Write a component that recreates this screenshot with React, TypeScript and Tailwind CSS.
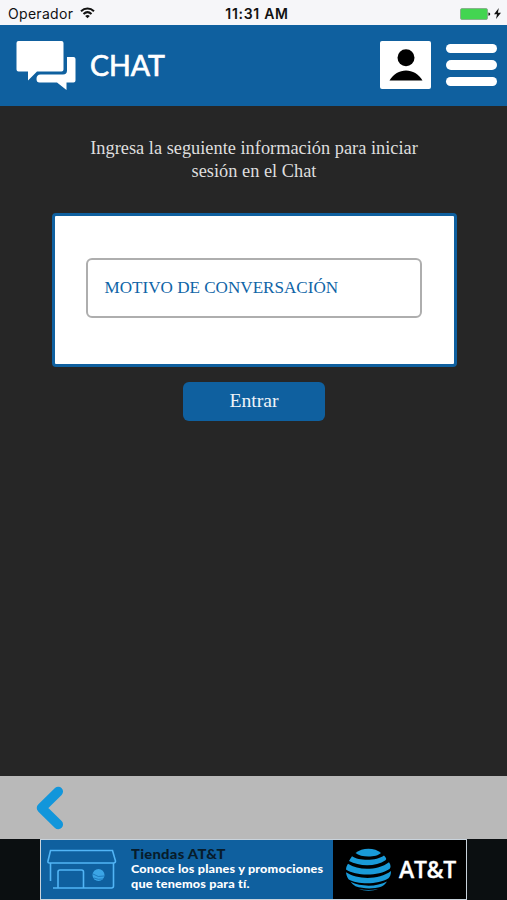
import React from "react";

function StatusBar() {
  return (
    <div className="flex h-[25px] shrink-0 items-center bg-[#f6f6f9] text-[#111] font-['Inter','Liberation_Sans',sans-serif]">
      <div className="flex flex-1 items-center gap-[7px] pl-[8px] pt-[3px]">
        <span className="text-[14px] leading-4 tracking-[0.3px]">Operador</span>
        <svg className="mb-[2px] h-[12px] w-[15px]" viewBox="0 0 15 12" fill="none" stroke="#111" strokeWidth="2">
          <path d="M1 4.3C4.8.6 10.2.6 14 4.3" />
          <path d="M3.5 7C6 4.7 9 4.7 11.5 7" />
          <path d="M7.5 11.3 5.2 8.9C6.6 7.7 8.4 7.7 9.8 8.9Z" fill="#111" stroke="none" />
        </svg>
      </div>
      <span className="ml-[5px] pt-[3px] text-[14px] leading-4 font-semibold tracking-[0.7px]">11:31 AM</span>
      <div className="flex flex-1 items-center justify-end gap-[3px] pr-[6px] pt-[2px]">
        <svg className="h-[12px] w-[31px]" viewBox="0 0 31 12">
          <rect x="0.5" y="0.5" width="27" height="11" rx="1.5" fill="#43d551" stroke="#83a487" strokeWidth="0.8" />
          <path d="M28.4 4.5C30.8 4.8 30.8 7.5 28.4 7.8Z" fill="#222" />
        </svg>
        <svg className="h-[11px] w-[7px]" viewBox="0 0 7 11">
          <path d="M4.8 0 0 6.2H3L2 11 7 4.7H3.9Z" fill="#111" />
        </svg>
      </div>
    </div>
  );
}

function Header() {
  return (
    <header className="flex h-[81px] shrink-0 items-start bg-[#0f609f] pt-[15px] pr-[10px] pl-[16px]">
      <svg className="h-[51px] w-[60px]" viewBox="0 0 60 51" fill="#fff">
        <path d="M2.5 1H45.5Q47.5 1 47.5 3V29.5Q47.5 31.5 45.5 31.5H21L12 40.5V31.5H2.5Q.5 31.5 .5 29.5V3Q.5 1 2.5 1Z" />
        <path d="M51 17H57.5Q59.5 17 59.5 19V40.5Q59.5 42.5 57.5 42.5H50.5V50L41 42.5H23.5Q20.5 42.5 20.5 39Q20.5 34.5 24.5 34.5H47Q51 34.5 51 30.5V17Z" />
      </svg>
      <h1 className="mt-[7px] ml-[14px] flex-1 font-['Lato',sans-serif] text-[28.5px] leading-9 font-normal text-white [-webkit-text-stroke:0.7px_white]">
        CHAT
      </h1>
      <div className="mt-[1px] flex h-[48px] w-[51px] justify-center rounded-[2px] bg-white">
        <svg className="mt-[8px] h-[33px] w-[34px]" viewBox="0 0 34 33">
          <circle cx="17" cy="8.8" r="8.5" />
          <path d="M.5 31.5C8 18 26 18 33.5 31.5Z" />
        </svg>
      </div>
      <div className="mt-[4px] ml-[15px] flex w-[51px] flex-col gap-[7px]">
        <span className="h-[9px] rounded-full bg-white" />
        <span className="h-[10px] rounded-full bg-white" />
        <span className="h-[9px] rounded-full bg-white" />
      </div>
    </header>
  );
}

function LoginPanel() {
  return (
    <main className="flex flex-1 flex-col items-center bg-[#262626] pl-px font-['Liberation_Serif',serif]">
      <p className="mt-[31px] text-center text-[18.35px] leading-[23px] text-[#dedede]">
        Ingresa la seguiente información para iniciar
        <br />
        sesión en el Chat
      </p>
      <div className="mt-[30px] h-[154px] w-[405px] rounded-[4px] border-[3px] border-[#0f609f] bg-white px-[31px] pt-[42px]">
        <div className="flex h-[60px] w-[336px] items-center rounded-[6px] border-2 border-[#aeaeae] pb-px pl-[17px] text-[17.1px] text-[#0f65a7]">
          <span>MOTIVO DE CONVERSACIÓN</span>
        </div>
      </div>
      <button className="mt-[15px] h-[39px] w-[142px] rounded-[6px] bg-[#0f609f] pb-px text-[19.7px] text-[#edf3f8]">Entrar</button>
    </main>
  );
}

function Ad() {
  return (
    <div className="flex h-[61px] shrink-0 justify-center bg-[#0b0f11]">
      <div className="flex h-[61px] w-[427px] border border-[#c9d3dc] bg-[#0f609f]">
        <svg className="mt-[9px] ml-[5px] h-[42px] w-[72px]" viewBox="0 0 72 42" fill="none" stroke="#52b5f6" strokeWidth="1.6">
          <path d="M4.5 1.5H66.5L69.5 12Q69.5 14 67.5 14H3.5Q1.5 14 2 12Z" />
          <path d="M4.5 14V32M7 39H65.5Q67.5 39 67.5 37V14" />
          <path d="M12 39V23Q12 21 14 21H35.5Q37.5 21 37.5 23V39" />
          <circle cx="52.5" cy="26" r="6" fill="#3ba5e6" stroke="none" />
          <path d="M47 25Q52 29 58 27M48 29Q52 31 57 30" stroke="#1670b5" strokeWidth="0.8" />
        </svg>
        <div className="mt-[7px] ml-[13px] w-[202px] font-['Lato',sans-serif] leading-[15px] font-black whitespace-nowrap text-white">
          <div className="origin-left scale-x-[1.18] text-[12.5px] tracking-[0.25px] text-[#071c2b]">Tiendas AT&amp;T</div>
          <div className="-mt-px origin-left scale-x-[1.15] text-[11px] tracking-[0.15px]">Conoce los planes y promociones</div>
          <div className="origin-left scale-x-[1.15] text-[11px] tracking-[0.15px]">que tenemos para tí.</div>
        </div>
        <div className="flex flex-1 items-center bg-black pl-[12px]">
          <svg className="h-[43px] w-[47px]" viewBox="0 0 47 43">
            <g fill="#199bd9">
              <path d="M10.5 5C17-.8 30-.8 36 5C31 9.8 16 9.8 10.5 5Z" />
              <path d="M7 8.2C14 13 32 13 39 7.5C41 9.5 42 11 40.5 12.2C31 19 14 18.5 4 13C5 11 6 9.5 7 8.2Z" />
              <path d="M3 15.8C14 23 33 22.5 44 14.2C46 17.2 46 19.5 44.5 21C33 28.5 11 28 1 21.5C1.2 19 2 17.5 3 15.8Z" />
              <path d="M1 24.3C13 32 34 32 46 23C46 26.5 45 29 43.5 30.2C33 37 12 36.5 3.5 31.2C2 29.2 1.2 26.7 1 24.3Z" />
              <path d="M5.5 33.8C16 39 32 39 42 33.5C40 36.5 38 38 36 38.7C28 41.2 18 40.8 10.5 38.3C8.5 37 7 35.5 5.5 33.8Z" />
              <path d="M14 41C20 42.2 27 42.2 33 41C28 43.3 19 43.3 14 41Z" />
            </g>
          </svg>
          <span className="-mt-[2px] ml-[7px] font-['Open_Sans','Liberation_Sans',sans-serif] text-[23px] leading-8 font-semibold tracking-[-0.3px] text-white [-webkit-text-stroke:0.3px_white]">AT&amp;T</span>
        </div>
      </div>
    </div>
  );
}

export default function App() {
  return (
    <div className="flex h-[900px] w-[507px] flex-col overflow-hidden">
      <StatusBar />
      <Header />
      <LoginPanel />
      <nav className="flex h-[63px] shrink-0 items-center bg-[#b9b9b9] pl-[35px]">
        <svg className="h-[44px] w-[29px]" viewBox="0 0 29 44" fill="none" stroke="#1296db" strokeWidth="9.5" strokeLinecap="round" strokeLinejoin="round">
          <path d="M23.3 5.5 6.5 22 23.3 38.5" />
        </svg>
      </nav>
      <Ad />
    </div>
  );
}
